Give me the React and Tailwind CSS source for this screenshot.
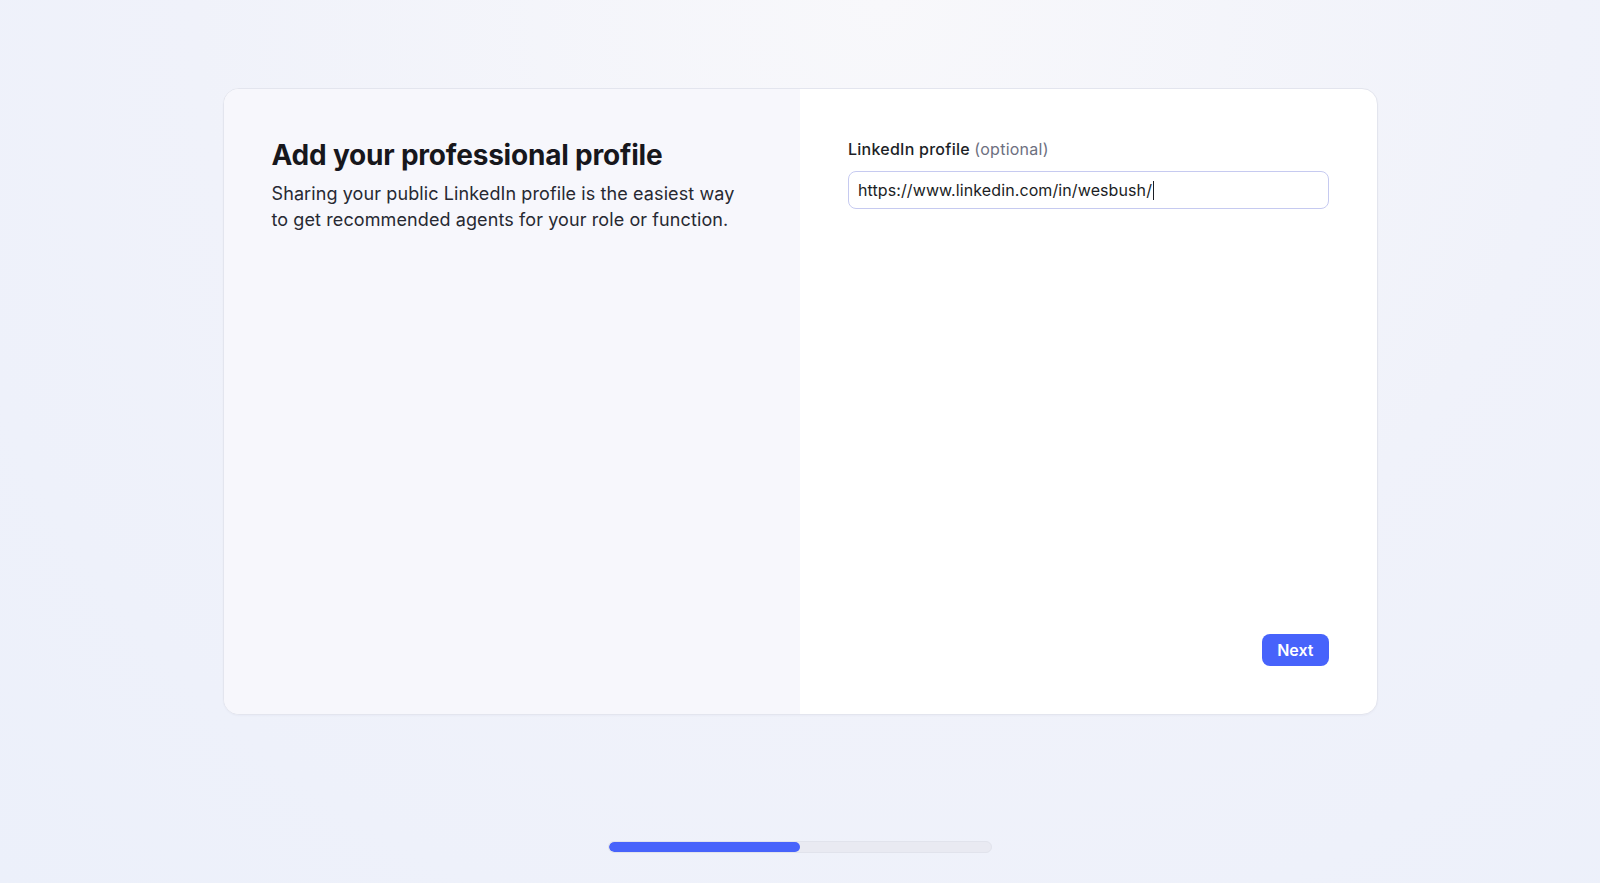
import { useState } from 'react';

const FONT = "font-['Inter','Noto_Sans',sans-serif]";

function ProgressBar({ value }) {
  return (
    <div className="w-96 h-3 rounded-full bg-[#e9eaf2] border border-[#e1e3ec] overflow-hidden">
      <div className="h-full rounded-full bg-[#4763fb]" style={{ width: `${value}%` }} />
    </div>
  );
}

export default function App() {
  const [url] = useState('https://www.linkedin.com/in/wesbush/');

  return (
    <div
      className={`min-h-screen ${FONT} bg-[radial-gradient(ellipse_at_55%_0%,#f8f8fb_0%,#f0f2fa_55%,#ecf0fa_100%)] flex flex-col items-center pt-[88px]`}
    >
      {/* Card */}
      <div className="w-[1155px] h-[627px] flex rounded-2xl border border-[#e3e5ee] bg-white overflow-hidden shadow-[0_1px_2px_rgba(30,40,90,0.03)]">
        {/* Left: intro */}
        <div className="w-1/2 bg-[#f7f7fc] p-12">
          <h1 className="text-[28px] leading-9 font-bold text-[#17171c] tracking-[-0.2px]">
            Add your professional profile
          </h1>
          <p className="mt-2 text-[18px] leading-[26px] tracking-[0.1px] text-[#272932] max-w-[475px]">
            Sharing your public LinkedIn profile is the easiest way to get recommended agents for your role or function.
          </p>
        </div>

        {/* Right: form */}
        <div className="w-1/2 p-12 flex flex-col justify-between">
          <div>
            <label className="block text-base leading-6 font-medium tracking-[0.25px] text-[#1d1f27]">
              LinkedIn profile <span className="font-normal text-[#6d7080]">(optional)</span>
            </label>
            <div className="mt-2.5 h-[38px] flex items-center rounded-lg border border-[#c6caf0] bg-white px-[9px] text-base tracking-[0.1px] text-[#1b1d24]">
              <span>{url}</span>
              <span className="ml-px w-px h-[19px] bg-[#1b1d24]" />
            </div>
          </div>

          <div className="flex justify-end">
            <button className="h-8 px-[15px] rounded-lg bg-[#4763fb] text-white text-base font-semibold">
              Next
            </button>
          </div>
        </div>
      </div>

      <div className="mt-[126px]">
        <ProgressBar value={50} />
      </div>
    </div>
  );
}
